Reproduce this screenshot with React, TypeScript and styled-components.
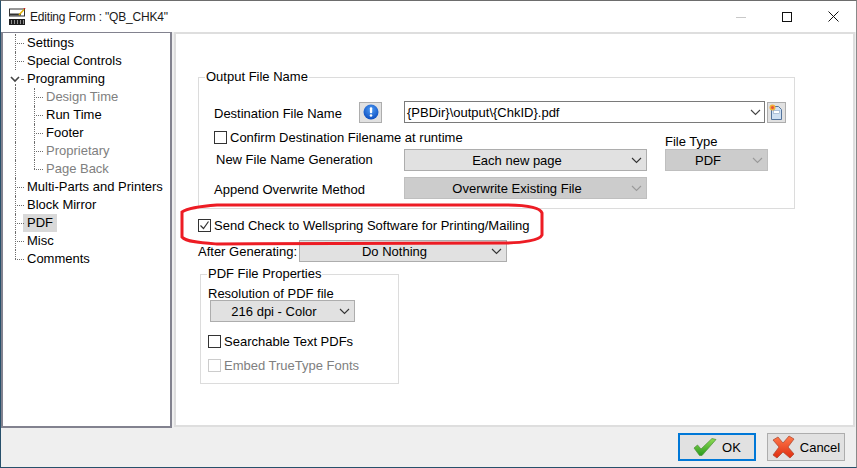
import * as React from 'react';
import styled, { createGlobalStyle, css } from 'styled-components';

const GlobalStyle = createGlobalStyle`
  html, body {
    margin: 0;
    padding: 0;
    background: #f0f0f0;
  }
  * {
    box-sizing: border-box;
  }
`;

const Window = styled.div`
  width: 857px;
  height: 468px;
  display: flex;
  flex-direction: column;
  position: relative;
  overflow: hidden;
  background: #efefef;
  border-top: 1px solid #6d6d6d;
  border-left: 1px solid #27506b;
  border-right: 1px solid #8a8a8a;
  border-bottom: 1px solid #27506b;
  font-family: 'Liberation Sans', Arial, sans-serif;
  font-size: 13px;
  color: #000;
`;

const TitleBar = styled.div`
  height: 31px;
  flex: none;
  display: flex;
  align-items: center;
  background: #fff;
  padding-left: 8px;
`;

const TitleText = styled.div`
  margin-left: 4px;
  font-size: 12px;
  letter-spacing: -0.2px;
  color: #1a1a1a;
`;

const WindowButtons = styled.div`
  margin-left: auto;
  display: flex;
  align-items: center;
`;

const WindowButton = styled.div`
  width: 46px;
  height: 30px;
  display: flex;
  align-items: center;
  justify-content: center;
`;

const Body = styled.div`
  height: 396px;
  flex: none;
  display: flex;
  background: #efefef;
`;

const TreePanel = styled.div`
  width: 171px;
  height: 396px;
  flex: none;
  background: #fff;
  border: 1px solid #82828f;
  border-width: 1px 2px 2px 2px;
  padding-top: 1px;
`;

const TreeRowBox = styled.div`
  height: 18px;
  display: flex;
  align-items: center;
  position: relative;
`;

const dotted = css`
  position: absolute;
  content: '';
`;

const Connector = styled.span<{ $last?: boolean; $left: number }>`
  position: absolute;
  left: ${p => p.$left}px;
  top: 0;
  width: 10px;
  height: 18px;
  &::before {
    ${dotted}
    left: 0;
    top: 0;
    bottom: ${p => (p.$last ? '9px' : '0')};
    border-left: 1px dotted #6e6e6e;
  }
  &::after {
    ${dotted}
    left: 0;
    top: 9px;
    width: 9px;
    border-top: 1px dotted #6e6e6e;
  }
`;

const TrunkLine = styled.span<{ $top?: number }>`
  position: absolute;
  left: 12px;
  top: ${p => p.$top ?? 0}px;
  bottom: 0;
  border-left: 1px dotted #6e6e6e;
`;

const ExpanderDot = styled.span`
  position: absolute;
  left: 18px;
  top: 9px;
  width: 2px;
  border-top: 1px dotted #6e6e6e;
`;

const TreeChevron = styled.svg`
  position: absolute;
  left: 7px;
  top: 6px;
`;

const TreeLabel = styled.span<{ $level: number; $disabled?: boolean; $selected?: boolean }>`
  margin-left: ${p => (p.$level === 0 ? 20 : 39)}px;
  padding: 0 4px;
  height: 18px;
  line-height: 18px;
  white-space: nowrap;
  color: ${p => (p.$disabled ? '#808080' : '#000')};
  background: ${p => (p.$selected ? '#d9d9d9' : 'transparent')};
`;

const MainPanel = styled.div`
  width: 681px;
  height: 395px;
  margin-left: 2px;
  background: #fff;
  border: 2px solid #dedede;
  padding: 36px 0 0 22px;
`;

const GroupBox = styled.fieldset<{ $width: number; $height: number }>`
  width: ${p => p.$width}px;
  height: ${p => p.$height}px;
  margin: 0;
  padding: 0;
  border: 1px solid #dcdcdc;
  position: relative;
  min-inline-size: 0;
`;

const GroupLegend = styled.legend`
  margin-left: 6px;
  padding: 0 1px;
  font-size: 13px;
  line-height: 14px;
  height: 14px;
`;

const OutputGrid = styled.div`
  display: grid;
  grid-template-columns: 190px 261px 103px;
  grid-template-rows: 22px 14px 22px 22px;
  row-gap: 6px;
  padding: 17px 0 0 15px;
`;

const DestinationRow = styled.div`
  grid-column: 1 / -1;
  display: flex;
  align-items: center;
  height: 22px;
`;

const FieldLabel = styled.span<{ $dim?: boolean }>`
  white-space: nowrap;
  color: ${p => (p.$dim ? '#808080' : '#000')};
`;

const DestLabelBox = styled.div`
  width: 145px;
  flex: none;
  padding-top: 2px;
`;

const IconButton = styled.div<{ $w: number }>`
  width: ${p => p.$w}px;
  height: 21px;
  background: #e1e1e1;
  border: 1px solid #adadad;
  display: flex;
  align-items: center;
  justify-content: center;
  flex: none;
`;

const ComboBox = styled.div`
  width: 361px;
  height: 22px;
  flex: none;
  margin: 0 2px 0 22px;
  background: #fff;
  border: 1px solid #7a7a7a;
  display: flex;
  align-items: center;
  padding: 0 3px 0 2px;
  justify-content: space-between;
`;

const SelectBox = styled.div<{ $width: number; $disabled?: boolean }>`
  width: ${p => p.$width}px;
  height: 22px;
  flex: none;
  display: flex;
  align-items: center;
  position: relative;
  background: ${p => (p.$disabled ? '#cccccc' : '#e1e1e1')};
  border: 1px solid ${p => (p.$disabled ? '#bfbfbf' : '#adadad')};
`;

const SelectText = styled.span`
  flex: 1;
  text-align: center;
  padding-right: 17px;
  white-space: nowrap;
`;

const SelectChevron = styled.svg`
  position: absolute;
  right: 4px;
  top: 7px;
`;

const CheckRow = styled.label<{ $dim?: boolean }>`
  display: flex;
  align-items: center;
  height: 16px;
  color: ${p => (p.$dim ? '#808080' : '#000')};
  white-space: nowrap;
`;

const CheckSquare = styled.span<{ $dim?: boolean }>`
  width: 13px;
  height: 13px;
  flex: none;
  margin-right: 3px;
  background: #fff;
  border: 1px solid ${p => (p.$dim ? '#cccccc' : '#333')};
  display: flex;
  align-items: center;
  justify-content: center;
`;

const ConfirmCell = styled.div`
  grid-column: 1 / 3;
`;

const FileTypeLabel = styled.div`
  margin-top: 5px;
  line-height: 16px;
`;

const RowLabelCell = styled.div<{ $indent?: number; $shift?: number }>`
  padding-left: ${p => p.$indent ?? 0}px;
  display: flex;
  align-items: center;
  transform: translateY(${p => p.$shift ?? 0}px);
`;

const SendRow = styled.div`
  height: 17px;
  display: flex;
  align-items: center;
  margin-top: 8px;
`;

const AfterRow = styled.div`
  margin-top: 6px;
  height: 22px;
  display: flex;
  align-items: center;
`;

const AfterLabel = styled.span`
  width: 101px;
  flex: none;
  white-space: nowrap;
`;

const PdfGroupWrap = styled.div`
  margin: 5px 0 0 2px;
`;

const PdfGroupBody = styled.div`
  padding: 5px 0 0 7px;
  display: flex;
  flex-direction: column;
  align-items: flex-start;
`;

const ResolutionSelect = styled.div`
  margin: -1px 0 0 2px;
`;

const PdfCheckList = styled.div`
  margin-top: 11px;
  display: flex;
  flex-direction: column;
  gap: 8px;
`;

const Footer = styled.div`
  flex: 1;
  display: flex;
  justify-content: flex-end;
  align-items: flex-start;
  gap: 11px;
  padding: 5px 11px 0 0;
`;

const DialogButton = styled.div<{ $primary?: boolean }>`
  width: 78px;
  height: 28px;
  display: flex;
  align-items: center;
  justify-content: center;
  gap: 5px;
  background: #e1e1e1;
  border: ${p => (p.$primary ? '2px solid #0078d7' : '1px solid #adadad')};
`;

const RedEllipse = styled.svg`
  position: absolute;
  left: 177px;
  top: 202px;
  pointer-events: none;
`;

const Chevron = ({ color = '#333' }: { color?: string }) => (
  <SelectChevron width="11" height="7" viewBox="0 0 11 7">
    <path d="M1 1l4.5 4.5L10 1" fill="none" stroke={color} strokeWidth="1.1" />
  </SelectChevron>
);

const AppIcon = () => (
  <svg width="17" height="17" viewBox="0 0 17 17">
    <rect x="0.5" y="1" width="15" height="7" fill="#fff" stroke="#333" />
    <rect x="1" y="5.5" width="11" height="2" fill="#333" />
    <path d="M10 7L15 1.5" stroke="#e0b000" strokeWidth="1.5" />
    <path d="M15 1l1-1" stroke="#d02020" strokeWidth="1.5" />
    <rect x="0" y="11" width="16" height="6" fill="#1c1c1c" />
    <path d="M2 13h1M5 13h1M8 13h1M11 13h1M14 13h1M2 15h1M5 15h1M8 15h1M11 15h1M14 15h1" stroke="#fff" />
  </svg>
);

const InfoIcon = () => (
  <svg width="16" height="16" viewBox="0 0 16 16">
    <defs>
      <radialGradient id="infoGrad" cx="50%" cy="35%" r="65%">
        <stop offset="0%" stopColor="#4f9cf5" />
        <stop offset="100%" stopColor="#0d4fc0" />
      </radialGradient>
    </defs>
    <circle cx="8" cy="8" r="7.5" fill="url(#infoGrad)" />
    <rect x="6.9" y="3.2" width="2.3" height="6" rx="1" fill="#fff" />
    <circle cx="8" cy="11.5" r="1.3" fill="#fff" />
  </svg>
);

const NewFileIcon = () => (
  <svg width="15" height="16" viewBox="0 0 15 16">
    <path d="M2.5 2.5h7l3 3v10h-10z" fill="#cfe0f2" stroke="#54749c" />
    <rect x="4.5" y="6.5" width="6" height="3" fill="#fff" stroke="#8aa4c4" strokeWidth="0.6" />
    <circle cx="3.5" cy="3.5" r="3" fill="#f2b13a" />
    <circle cx="3.5" cy="3.5" r="1.5" fill="#e8503a" />
  </svg>
);

const CheckMarkIcon = () => (
  <svg width="24" height="20" viewBox="0 0 24 20">
    <defs>
      <linearGradient id="okGrad" x1="0" y1="0" x2="0" y2="1">
        <stop offset="0%" stopColor="#8fdc55" />
        <stop offset="100%" stopColor="#2a9a1e" />
      </linearGradient>
    </defs>
    <path d="M1 11l3.5-3 3.5 4L19 1.5 23 2.5 9 18.5H6.5z" fill="url(#okGrad)" stroke="#4c8f3a" strokeWidth="0.7" />
  </svg>
);

const CrossIcon = () => (
  <svg width="23" height="24" viewBox="0 0 23 24">
    <defs>
      <linearGradient id="crossGrad" x1="0" y1="0" x2="0" y2="1">
        <stop offset="0%" stopColor="#ff7a4c" />
        <stop offset="100%" stopColor="#df2d10" />
      </linearGradient>
    </defs>
    <path
      d="M1 5l5-3 5 6 6-7 5 3-6 8 6 7-4 4-7-6-6 6-4-3 6-8z"
      fill="url(#crossGrad)"
      stroke="#a8442c"
      strokeWidth="0.7"
      strokeLinejoin="round"
    />
  </svg>
);

type TreeItem = {
  label: string;
  level: 0 | 1;
  disabled?: boolean;
  selected?: boolean;
  last?: boolean;
  expander?: boolean;
};

const treeItems: TreeItem[] = [
  { label: 'Settings', level: 0 },
  { label: 'Special Controls', level: 0 },
  { label: 'Programming', level: 0, expander: true },
  { label: 'Design Time', level: 1, disabled: true },
  { label: 'Run Time', level: 1 },
  { label: 'Footer', level: 1 },
  { label: 'Proprietary', level: 1, disabled: true },
  { label: 'Page Back', level: 1, disabled: true, last: true },
  { label: 'Multi-Parts and Printers', level: 0 },
  { label: 'Block Mirror', level: 0 },
  { label: 'PDF', level: 0, selected: true },
  { label: 'Misc', level: 0 },
  { label: 'Comments', level: 0, last: true },
];

const TreeRow = ({ item }: { item: TreeItem }) => (
  <TreeRowBox>
    {item.level === 1 && <TrunkLine />}
    {item.level === 1 && <Connector $left={31} $last={item.last} />}
    {item.level === 0 && !item.expander && <Connector $left={12} $last={item.last} />}
    {item.expander && (
      <>
        <TrunkLine $top={14} />
        <ExpanderDot />
        <TreeChevron width="10" height="7" viewBox="0 0 10 7">
          <path d="M1 1l4 4 4-4" fill="none" stroke="#444" strokeWidth="1.6" />
        </TreeChevron>
      </>
    )}
    <TreeLabel $level={item.level} $disabled={item.disabled} $selected={item.selected}>
      {item.label}
    </TreeLabel>
  </TreeRowBox>
);

const Check = ({ label, checked, dim }: { label: string; checked?: boolean; dim?: boolean }) => (
  <CheckRow $dim={dim}>
    <CheckSquare $dim={dim}>
      {checked && (
        <svg width="11" height="11" viewBox="0 0 11 11">
          <path d="M1.5 5.5l3 3 5-7" fill="none" stroke="#333" strokeWidth="1.2" />
        </svg>
      )}
    </CheckSquare>
    {label}
  </CheckRow>
);

const Select = ({ width, text, disabled }: { width: number; text: string; disabled?: boolean }) => (
  <SelectBox $width={width} $disabled={disabled}>
    <SelectText>{text}</SelectText>
    <Chevron color={disabled ? '#9a9a9a' : '#333'} />
  </SelectBox>
);

export default function App() {
  return (
    <>
      <GlobalStyle />
      <Window>
        <TitleBar>
          <AppIcon />
          <TitleText>Editing Form : "QB_CHK4"</TitleText>
          <WindowButtons>
            <WindowButton>
              <svg width="10" height="10" viewBox="0 0 10 10">
                <path d="M0 5.5h10" stroke="#c8c8c8" />
              </svg>
            </WindowButton>
            <WindowButton>
              <svg width="10" height="10" viewBox="0 0 10 10">
                <rect x="0.5" y="0.5" width="9" height="9" fill="none" stroke="#111" />
              </svg>
            </WindowButton>
            <WindowButton>
              <svg width="11" height="11" viewBox="0 0 11 11">
                <path d="M0.5 0.5l10 10M10.5 0.5l-10 10" stroke="#111" />
              </svg>
            </WindowButton>
          </WindowButtons>
        </TitleBar>
        <Body>
          <TreePanel>
            {treeItems.map(item => (
              <TreeRow key={item.label} item={item} />
            ))}
          </TreePanel>
          <MainPanel>
            <GroupBox $width={597} $height={139}>
              <GroupLegend>Output File Name</GroupLegend>
              <OutputGrid>
                <DestinationRow>
                  <DestLabelBox>
                    <FieldLabel>Destination File Name</FieldLabel>
                  </DestLabelBox>
                  <IconButton $w={23}>
                    <InfoIcon />
                  </IconButton>
                  <ComboBox>
                    <span>{'{PBDir}\\output\\{ChkID}.pdf'}</span>
                    <svg width="11" height="7" viewBox="0 0 11 7">
                      <path d="M1 1l4.5 4.5L10 1" fill="none" stroke="#444" strokeWidth="1.1" />
                    </svg>
                  </ComboBox>
                  <IconButton $w={19}>
                    <NewFileIcon />
                  </IconButton>
                </DestinationRow>
                <ConfirmCell>
                  <Check label="Confirm Destination Filename at runtime" />
                </ConfirmCell>
                <FileTypeLabel>File Type</FileTypeLabel>
                <RowLabelCell $indent={2} $shift={-1}>
                  <FieldLabel>New File Name Generation</FieldLabel>
                </RowLabelCell>
                <Select width={243} text="Each new page" />
                <Select width={103} text="PDF" disabled />
                <RowLabelCell $shift={1}>
                  <FieldLabel>Append Overwrite Method</FieldLabel>
                </RowLabelCell>
                <Select width={243} text="Overwrite Existing File" disabled />
              </OutputGrid>
            </GroupBox>
            <SendRow>
              <Check label="Send Check to Wellspring Software for Printing/Mailing" checked />
            </SendRow>
            <AfterRow>
              <AfterLabel>After Generating:</AfterLabel>
              <Select width={208} text="Do Nothing" />
            </AfterRow>
            <PdfGroupWrap>
              <GroupBox $width={199} $height={117}>
                <GroupLegend>PDF File Properties</GroupLegend>
                <PdfGroupBody>
                  <FieldLabel>Resolution of PDF file</FieldLabel>
                  <ResolutionSelect>
                    <Select width={145} text="216 dpi - Color" />
                  </ResolutionSelect>
                  <PdfCheckList>
                    <Check label="Searchable Text PDFs" />
                    <Check label="Embed TrueType Fonts" dim />
                  </PdfCheckList>
                </PdfGroupBody>
              </GroupBox>
            </PdfGroupWrap>
          </MainPanel>
        </Body>
        <Footer>
          <DialogButton $primary>
            <CheckMarkIcon />
            OK
          </DialogButton>
          <DialogButton>
            <CrossIcon />
            Cancel
          </DialogButton>
        </Footer>
        <RedEllipse width="370" height="44" viewBox="0 0 370 44">
          <path
            d="M4 9C10 5 25 3 39 2L325 2C345 2 362 4 364 10L364 32C362 37 345 40 325 40L39 41C25 40 8 39 4 34Z"
            fill="none"
            stroke="#ed1c24"
            strokeWidth="3"
          />
        </RedEllipse>
      </Window>
    </>
  );
}
